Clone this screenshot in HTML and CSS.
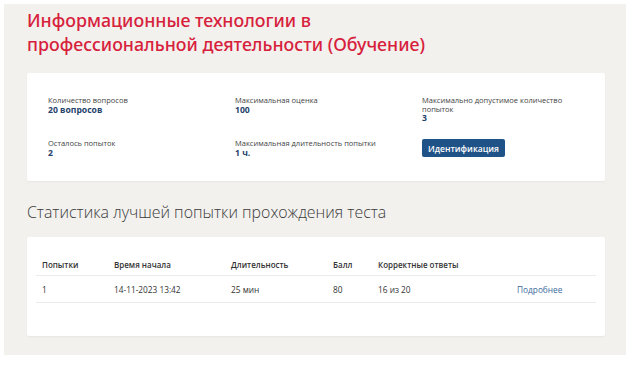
FILE: index.html
```html
<!DOCTYPE html>
<html lang="ru">
<head>
<meta charset="utf-8">
<link rel="stylesheet" href="styles.css">
</head>
<body>
<div class="page">
  <h1 class="title">Информационные технологии в<br>профессиональной деятельности (Обучение)</h1>
  <section class="card info">
    <div class="item">
      <div class="label">Количество вопросов</div>
      <div class="value">20 вопросов</div>
    </div>
    <div class="item">
      <div class="label">Максимальная оценка</div>
      <div class="value">100</div>
    </div>
    <div class="item">
      <div class="label">Максимально допустимое количество<br>попыток</div>
      <div class="value">3</div>
    </div>
    <div class="item">
      <div class="label">Осталось попыток</div>
      <div class="value">2</div>
    </div>
    <div class="item">
      <div class="label">Максимальная длительность попытки</div>
      <div class="value">1 ч.</div>
    </div>
    <div class="item">
      <button class="btn">Идентификация</button>
    </div>
  </section>
  <h2 class="subtitle">Статистика лучшей попытки прохождения теста</h2>
  <section class="card stats">
    <table class="table">
      <colgroup>
        <col class="c1"><col class="c2"><col class="c3"><col class="c4"><col class="c5"><col class="c6">
      </colgroup>
      <thead>
        <tr><th>Попытки</th><th>Время начала</th><th>Длительность</th><th>Балл</th><th>Корректные ответы</th><th></th></tr>
      </thead>
      <tbody>
        <tr><td>1</td><td>14-11-2023 13:42</td><td>25 мин</td><td>80</td><td>16 из 20</td><td><a class="link" href="#">Подробнее</a></td></tr>
      </tbody>
    </table>
  </section>
</div>
</body>
</html>
```
FILE: styles.css
```css
html, body {
  margin: 0;
  padding: 0;
  background: #ffffff;
}
body {
  font-family: "Open Sans", "Noto Sans", sans-serif;
  color: #333;
}
.page {
  margin: 4px 0 0 4px;
  width: 622px;
  height: 351px;
  box-sizing: border-box;
  background: #f2f1ee;
  padding: 4px 21px 0 23px;
}
.title {
  margin: 0;
  font-family: "Noto Sans", sans-serif;
  font-weight: 500;
  font-size: 17.8px;
  line-height: 24px;
  color: #d7213c;
}
.card {
  background: #fff;
  border-radius: 2px;
  box-shadow: 0 1px 2px rgba(0,0,0,0.05);
}
.info {
  margin-top: 17px;
  height: 108px;
  box-sizing: border-box;
  padding: 23px 0 0 21px;
  display: grid;
  grid-template-columns: 187px 187px 1fr;
  row-gap: 16px;
  align-content: start;
}
.label {
  font-size: 7.5px;
  line-height: 8.5px;
  color: #444;
}
.value {
  font-size: 8.6px;
  line-height: 10px;
  font-weight: 700;
  color: #24426b;
}
.btn {
  display: block;
  height: 18px;
  width: 83px;
  padding: 0;
  border: none;
  border-radius: 2px;
  background: #1f5287;
  color: #fff;
  font-family: "Open Sans", sans-serif;
  font-size: 8.5px;
  font-weight: 600;
}
.subtitle {
  margin: 20px 0 0 0;
  font-weight: 300;
  font-size: 15.9px;
  line-height: 22px;
  color: #3a3a3a;
}
.stats {
  margin-top: 14px;
  height: 99px;
  box-sizing: border-box;
  padding: 17px 9px 0 9px;
}
.table {
  width: 560px;
  border-collapse: collapse;
  table-layout: fixed;
  font-size: 8.3px;
}
.c1 { width: 72px; }
.c2 { width: 117px; }
.c3 { width: 102px; }
.c4 { width: 45px; }
.c5 { width: 139px; }
.c6 { width: 85px; }
.table th {
  text-align: left;
  font-size: 8px;
  font-weight: 600;
  height: 21px;
  padding: 0 0 0 6px;
  vertical-align: middle;
  border-bottom: 1px solid #ebebeb;
  color: #333;
}
.table td {
  height: 26px;
  padding: 0 0 0 6px;
  vertical-align: middle;
  border-bottom: 1px solid #ebebeb;
  color: #333;
}
.link {
  color: #3b6a9c;
  text-decoration: none;
}
```
